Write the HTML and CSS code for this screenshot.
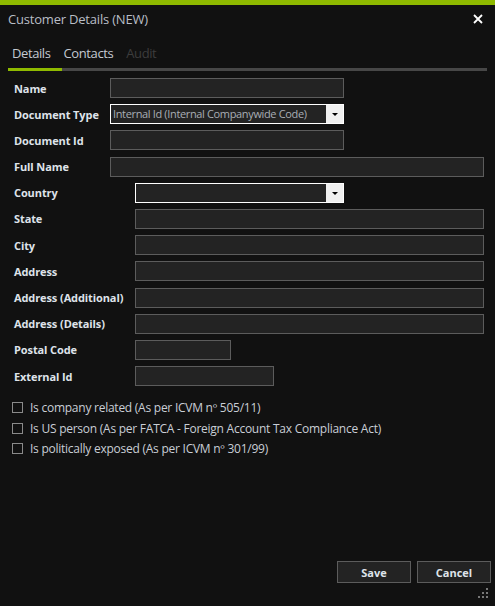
FILE: index.html
```html
<!DOCTYPE html>
<html lang="en">
<head>
    <meta charset="UTF-8">
    <meta name="viewport" content="width=device-width, initial-scale=1">
    <title>Customer Details (NEW)</title>
    <link rel="stylesheet" href="styles.css">
</head>
<body>
    <div class="dialog">
        <div class="title-bar">
            <span class="title">Customer Details (NEW)</span>
            <button class="close" title="Close">
                <svg width="10" height="10" viewBox="0 0 10 10"><path d="M1 1L9 9M9 1L1 9" stroke="#fff" stroke-width="1.8"/></svg>
            </button>
        </div>

        <div class="tabs">
            <span class="tab active">Details</span>
            <span class="tab">Contacts</span>
            <span class="tab disabled">Audit</span>
        </div>
        <div class="tab-line"><div class="tab-line-active"></div></div>

        <div class="form">
            <div class="group group-short">
                <label>Name</label>
                <input type="text" class="w-mid">
                <label>Document Type</label>
                <div class="combo w-mid">
                    <span class="combo-text">Internal Id (Internal Companywide Code)</span>
                    <span class="combo-btn"><span class="arrow"></span></span>
                </div>
                <label>Document Id</label>
                <input type="text" class="w-mid">
                <label>Full Name</label>
                <input type="text" class="w-full">
            </div>
            <div class="group group-long">
                <label>Country</label>
                <div class="combo w-country">
                    <span class="combo-text"></span>
                    <span class="combo-btn"><span class="arrow"></span></span>
                </div>
                <label>State</label>
                <input type="text" class="w-full">
                <label>City</label>
                <input type="text" class="w-full">
                <label>Address</label>
                <input type="text" class="w-full">
                <label>Address (Additional)</label>
                <input type="text" class="w-full">
                <label>Address (Details)</label>
                <input type="text" class="w-full">
                <label>Postal Code</label>
                <input type="text" class="w-postal">
                <label>External Id</label>
                <input type="text" class="w-ext">
            </div>

            <div class="checks">
                <label class="check"><span class="box"></span>Is company related (As per ICVM nº 505/11)</label>
                <label class="check"><span class="box"></span>Is US person (As per FATCA - Foreign Account Tax Compliance Act)</label>
                <label class="check"><span class="box"></span>Is politically exposed (As per ICVM nº 301/99)</label>
            </div>
        </div>

        <div class="footer">
            <button class="btn">Save</button>
            <button class="btn">Cancel</button>
        </div>
        <svg class="grip" width="12" height="12" viewBox="0 0 12 12">
            <rect x="8" y="0" width="2" height="2" fill="#777"/>
            <rect x="4" y="4" width="2" height="2" fill="#777"/>
            <rect x="8" y="4" width="2" height="2" fill="#777"/>
            <rect x="0" y="8" width="2" height="2" fill="#777"/>
            <rect x="4" y="8" width="2" height="2" fill="#777"/>
            <rect x="8" y="8" width="2" height="2" fill="#777"/>
        </svg>
    </div>
</body>
</html>
```

FILE: styles.css
```css
html, body {
    margin: 0;
    padding: 0;
    background: #111111;
}
body {
    font-family: "Open Sans", "Noto Sans", Arial, sans-serif;
    color: #dde2ea;
}
.dialog {
    position: relative;
    height: 606px;
    box-sizing: border-box;
    border-top: 5px solid #8fba00;
    display: flex;
    flex-direction: column;
}
.title-bar {
    height: 28px;
    display: flex;
    align-items: center;
    justify-content: space-between;
    padding: 0 12px 0 8px;
}
.title {
    font-size: 13px;
    color: #b9bec6;
    letter-spacing: -0.2px;
}
.close {
    background: none;
    border: none;
    padding: 0;
    width: 10px;
    height: 10px;
    display: flex;
    cursor: pointer;
}
.tabs {
    display: flex;
    padding: 11px 0 0 12px;
    height: 24px;
}
.tab {
    font-size: 13px;
    color: #c4c9d1;
    margin-right: 13px;
    letter-spacing: -0.4px;
}
.tab.disabled {
    color: #3d3d3d;
}
.tab-line {
    margin: 0 8px;
    height: 3px;
    background: #474747;
}
.tab-line-active {
    width: 54px;
    height: 3px;
    background: #8fba00;
}
.form {
    padding: 7px 11px 0 14px;
}
.group {
    display: grid;
    row-gap: 6.2px;
    align-items: center;
}
.group-short {
    grid-template-columns: 96px 1fr;
}
.group-long {
    grid-template-columns: 121px 1fr;
    margin-top: 6.2px;
}
.group label {
    font-size: 11px;
    font-weight: bold;
    color: #dfe3ea;
    white-space: nowrap;
    letter-spacing: -0.1px;
}
input {
    height: 20px;
    box-sizing: border-box;
    background: #232323;
    border: 1px solid #5c5c5c;
    color: #ddd;
    padding: 0 3px;
    font-family: inherit;
    font-size: 11px;
    outline: none;
}
.w-mid { width: 234px; }
.w-full { width: 100%; }
.w-country { width: 209px; }
.w-postal { width: 96px; }
.w-ext { width: 139px; }
.combo {
    height: 20px;
    box-sizing: border-box;
    border: 1px solid #ffffff;
    background: #232323;
    display: flex;
}
.combo-text {
    flex: 1;
    font-size: 11px;
    color: #a9aeb5;
    line-height: 18px;
    padding-left: 2px;
    white-space: nowrap;
    overflow: hidden;
    letter-spacing: -0.35px;
}
.combo-btn {
    width: 17px;
    background: #f0f0f0;
    display: flex;
    align-items: center;
    justify-content: center;
}
.arrow {
    width: 0;
    height: 0;
    border-left: 3px solid transparent;
    border-right: 3px solid transparent;
    border-top: 3px solid #000;
    margin-top: 1px;
}
.checks {
    display: flex;
    flex-direction: column;
    gap: 9.5px;
    margin-top: 16px;
    margin-left: -2px;
}
.check {
    display: flex;
    align-items: center;
    font-size: 12px;
    color: #c9ced6;
    height: 11px;
    letter-spacing: -0.25px;
}
.box {
    width: 9px;
    height: 9px;
    border: 1px solid #8a8a8a;
    margin-right: 7px;
    flex: none;
}
.footer {
    margin-top: auto;
    display: flex;
    justify-content: flex-end;
    gap: 6px;
    padding: 0 4px 23px 0;
}
.btn {
    width: 74px;
    height: 22px;
    background: #232323;
    border: 1px solid #5c5c5c;
    color: #dfe3ea;
    font-family: inherit;
    font-size: 11px;
    font-weight: bold;
    cursor: pointer;
}
.btn:hover {
    background: #2c2c2c;
}
.grip {
    position: absolute;
    right: 5px;
    bottom: 6px;
}
```
